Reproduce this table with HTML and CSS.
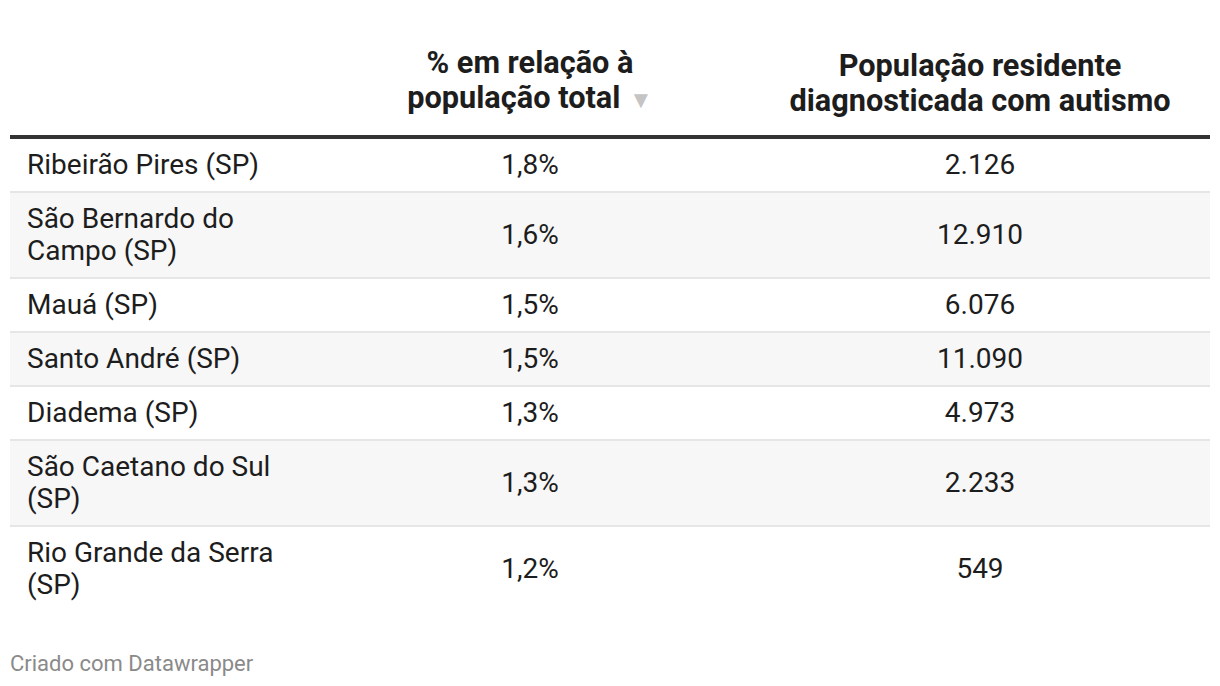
FILE: index.html
```html
<!DOCTYPE html>
<html lang="pt-BR">
<head>
<meta charset="utf-8">
<title>Autismo ABC</title>
<link rel="stylesheet" href="styles.css">
</head>
<body>
<div class="chart">
  <table class="dw-table">
    <thead>
      <tr>
        <th class="col-name"></th>
        <th class="col-pct"><span class="th-text">% em relação à<br>população total <span class="sort">▼</span></span></th>
        <th class="col-pop"><span class="th-text">População residente<br>diagnosticada com autismo</span></th>
      </tr>
    </thead>
    <tbody>
      <tr><td class="name"><span class="wrap">Ribeirão Pires (SP)</span></td><td class="num">1,8%</td><td class="num">2.126</td></tr>
      <tr><td class="name"><span class="wrap">São Bernardo do Campo (SP)</span></td><td class="num">1,6%</td><td class="num">12.910</td></tr>
      <tr><td class="name"><span class="wrap">Mauá (SP)</span></td><td class="num">1,5%</td><td class="num">6.076</td></tr>
      <tr><td class="name"><span class="wrap">Santo André (SP)</span></td><td class="num">1,5%</td><td class="num">11.090</td></tr>
      <tr><td class="name"><span class="wrap">Diadema (SP)</span></td><td class="num">1,3%</td><td class="num">4.973</td></tr>
      <tr><td class="name"><span class="wrap">São Caetano do Sul (SP)</span></td><td class="num">1,3%</td><td class="num">2.233</td></tr>
      <tr><td class="name"><span class="wrap">Rio Grande da Serra (SP)</span></td><td class="num">1,2%</td><td class="num">549</td></tr>
    </tbody>
  </table>
  <div class="footer">Criado com Datawrapper</div>
</div>
</body>
</html>
```

FILE: styles.css
```css
html, body {
  margin: 0;
  padding: 0;
  background: #ffffff;
}
body {
  font-family: Roboto, "Liberation Sans", Arial, sans-serif;
  color: #1d1d1d;
}
.chart {
  padding: 45px 10px 0 10px;
}
.dw-table {
  width: 1200px;
  border-collapse: collapse;
  table-layout: fixed;
}
.dw-table th {
  font-weight: 700;
  font-size: 30.7px;
  line-height: 35px;
  color: #1d1d1d;
  text-align: center;
  vertical-align: bottom;
  padding: 0 0 17px 0;
  border-bottom: 4px solid #333333;
}
.col-name { width: 300px; }
.col-pct { width: 440px; }
.col-pop { width: 460px; }
.sort {
  color: #c4c4c4;
  font-size: 24px;
  vertical-align: 0;
  margin-left: 1px;
}
.dw-table td {
  font-size: 28px;
  line-height: 32px;
  padding: 10px 0;
  border-bottom: 2px solid #e6e6e6;
  vertical-align: middle;
}
.dw-table tbody tr:nth-child(even) td {
  background: #f7f7f7;
}
.dw-table tbody tr:last-child td {
  border-bottom: none;
}
.dw-table td.name {
  padding-left: 17px;
  text-align: left;
}
.wrap {
  display: block;
  max-width: 262px;
}
.dw-table td.num {
  text-align: center;
}
.footer {
  margin-top: 40px;
  font-size: 22px;
  line-height: 26px;
  color: #8a8a8a;
}
```
